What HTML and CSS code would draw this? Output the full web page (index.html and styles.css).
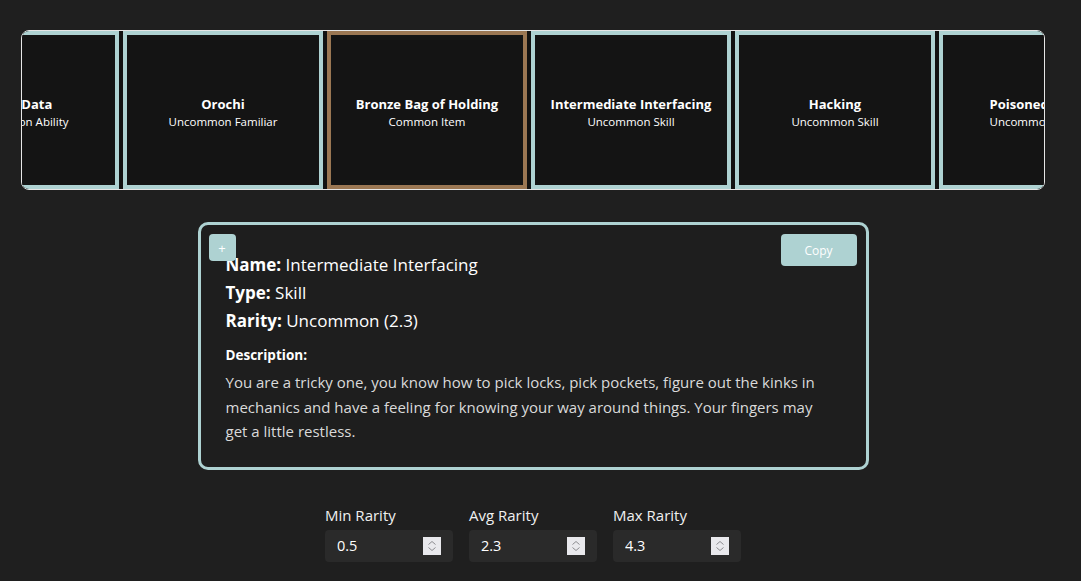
FILE: index.html
```html
<!DOCTYPE html>
<html lang="en">
  <head>
    <meta charset="UTF-8" />
    <meta name="viewport" content="width=device-width, initial-scale=1.0" />
    <title>Card Roller</title>
    <link rel="stylesheet" href="styles.css">
  </head>
  <body>
    <div class="page">
      <div class="carousel">
        <div class="track">
          <div class="card">
            <div class="card-title">Read Data</div>
            <div class="card-sub">Uncommon Ability</div>
          </div>
          <div class="card">
            <div class="card-title">Orochi</div>
            <div class="card-sub">Uncommon Familiar</div>
          </div>
          <div class="card common">
            <div class="card-title">Bronze Bag of Holding</div>
            <div class="card-sub">Common Item</div>
          </div>
          <div class="card">
            <div class="card-title">Intermediate Interfacing</div>
            <div class="card-sub">Uncommon Skill</div>
          </div>
          <div class="card">
            <div class="card-title">Hacking</div>
            <div class="card-sub">Uncommon Skill</div>
          </div>
          <div class="card">
            <div class="card-title">Poisoned Blade</div>
            <div class="card-sub">Uncommon Ability</div>
          </div>
        </div>
      </div>

      <div class="details">
        <button class="btn-add">+</button>
        <button class="btn-copy">Copy</button>
        <div class="row"><b>Name:</b> Intermediate Interfacing</div>
        <div class="row"><b>Type:</b> Skill</div>
        <div class="row"><b>Rarity:</b> Uncommon (2.3)</div>
        <div class="desc-title">Description:</div>
        <p class="desc">You are a tricky one, you know how to pick locks, pick pockets, figure out the kinks in mechanics and have a feeling for knowing your way around things. Your fingers may get a little restless.</p>
      </div>

      <div class="controls">
        <label class="field">
          <span>Min Rarity</span>
          <div class="num">
            <input type="text" value="0.5" />
            <span class="spin"><svg width="18" height="18" viewBox="0 0 18 18"><path d="M5.5 7.5 9 4.5l3.5 3M5.5 10.5 9 13.5l3.5-3" fill="none" stroke="#8c8c90" stroke-width="1"/></svg></span>
          </div>
        </label>
        <label class="field">
          <span>Avg Rarity</span>
          <div class="num">
            <input type="text" value="2.3" />
            <span class="spin"><svg width="18" height="18" viewBox="0 0 18 18"><path d="M5.5 7.5 9 4.5l3.5 3M5.5 10.5 9 13.5l3.5-3" fill="none" stroke="#8c8c90" stroke-width="1"/></svg></span>
          </div>
        </label>
        <label class="field">
          <span>Max Rarity</span>
          <div class="num">
            <input type="text" value="4.3" />
            <span class="spin"><svg width="18" height="18" viewBox="0 0 18 18"><path d="M5.5 7.5 9 4.5l3.5 3M5.5 10.5 9 13.5l3.5-3" fill="none" stroke="#8c8c90" stroke-width="1"/></svg></span>
          </div>
        </label>
      </div>
    </div>
  </body>
</html>
```

FILE: styles.css
```css
* {
  box-sizing: border-box;
  font-family: "Segoe UI", "Open Sans", "Noto Sans", sans-serif;
}

body {
  margin: 0;
  background-color: #1f1f1f;
  color: #fff;
}

.page {
  width: 1024px;
  margin-left: 21px;
  padding-top: 30px;
  display: flex;
  flex-direction: column;
  align-items: center;
}

.carousel {
  width: 1024px;
  height: 160px;
  border: 1px solid #e6e6e6;
  border-radius: 8px;
  overflow: hidden;
  background-color: #121212;
}

.track {
  display: flex;
  gap: 4px;
  margin-left: -103px;
}

.card {
  flex: 0 0 200px;
  height: 158px;
  border: 4px solid #aed2d2;
  background-color: #141414;
  display: flex;
  flex-direction: column;
  align-items: center;
  justify-content: center;
  padding-top: 4px;
  white-space: nowrap;
}

.card.common {
  border-color: #9b7753;
}

.card-title {
  font-size: 13px;
  font-weight: 700;
  line-height: 18px;
}

.card-sub {
  font-size: 11.5px;
  line-height: 17px;
}

.details {
  position: relative;
  width: 671px;
  margin-top: 32px;
  border: 3px solid #aed2d2;
  border-radius: 10px;
  padding: 26px 25px 23px;
  background-color: #1e1e1e;
}

.row {
  font-size: 17px;
  line-height: 28px;
}

.desc-title {
  margin-top: 7px;
  font-size: 13.5px;
  font-weight: 700;
  line-height: 26px;
}

.desc {
  margin: 2px 0 0;
  padding-right: 20px;
  font-size: 15px;
  line-height: 24.5px;
  color: #dadada;
}

.btn-add {
  position: absolute;
  left: 8px;
  top: 9px;
  width: 27px;
  height: 27px;
  border: none;
  border-radius: 4px;
  background-color: #aed2d2;
  color: #fff;
  font-size: 13px;
  padding: 0;
}

.btn-copy {
  position: absolute;
  right: 9px;
  top: 9px;
  width: 76px;
  height: 32px;
  border: none;
  border-radius: 4px;
  background-color: #aed2d2;
  color: #fff;
  font-size: 12px;
}

.controls {
  display: flex;
  gap: 16px;
  margin-top: 35px;
}

.field {
  display: flex;
  flex-direction: column;
  gap: 5px;
  font-size: 15px;
  color: #f0f0f0;
}

.num {
  width: 128px;
  height: 32px;
  border-radius: 4px;
  background-color: #2a2a2a;
  display: flex;
  align-items: center;
  padding: 0 12px;
}

.num input {
  flex: 1;
  min-width: 0;
  border: none;
  background: transparent;
  color: #fff;
  font-size: 14.5px;
  padding: 0;
  outline: none;
}

.spin {
  width: 18px;
  height: 18px;
  background-color: #e9e9ed;
  display: flex;
}
```
